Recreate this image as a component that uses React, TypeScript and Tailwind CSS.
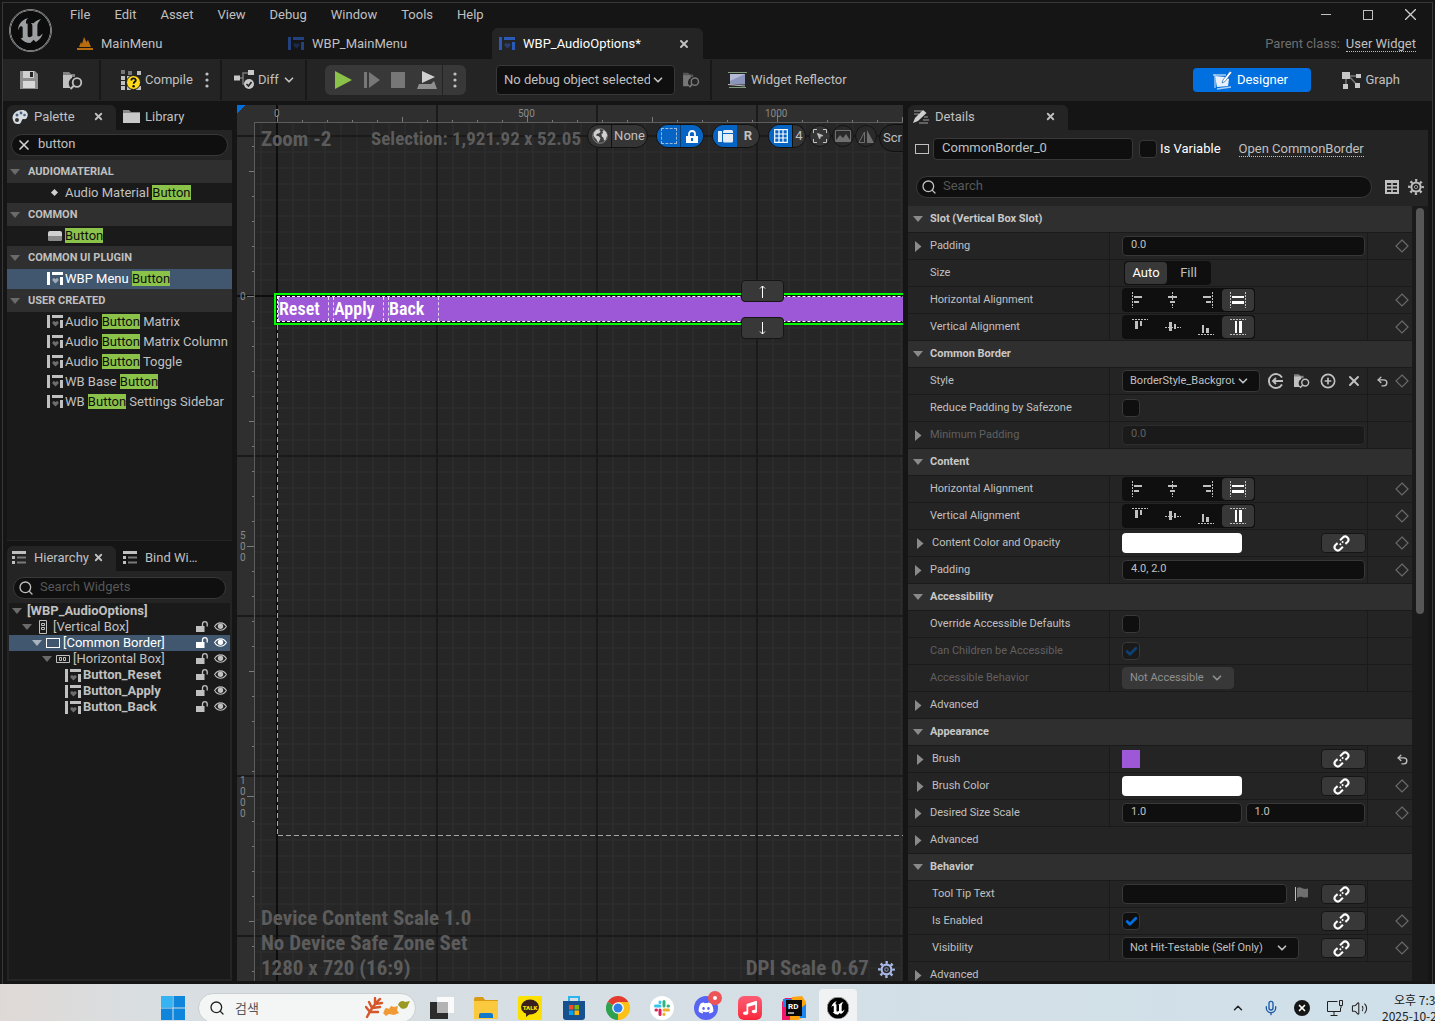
import { ReactNode } from "react";
import { SiUnrealengine } from "react-icons/si";
import { FaDiscord, FaMusic } from "react-icons/fa";
import {
  Check,
  ChevronDown,
  ChevronUp,
  CirclePlus,
  Mic,
  MousePointer2,
  Search,
  Undo2,
  Volume2,
  X,
} from "lucide-react";
import clsx from "clsx";

const menuItems = ["File", "Edit", "Asset", "View", "Debug", "Window", "Tools", "Help"];

const paletteGroups = [
  { name: "AUDIOMATERIAL", items: [{ icon: "dot", before: "Audio Material ", after: "" }] },
  { name: "COMMON", items: [{ icon: "button", before: "", after: "" }] },
  {
    name: "COMMON UI PLUGIN",
    items: [{ icon: "widget", before: "WBP Menu ", after: "", selected: true }],
  },
  {
    name: "USER CREATED",
    items: [
      { icon: "widget", before: "Audio ", after: " Matrix" },
      { icon: "widget", before: "Audio ", after: " Matrix Column" },
      { icon: "widget", before: "Audio ", after: " Toggle" },
      { icon: "widget", before: "WB Base ", after: "" },
      { icon: "widget", before: "WB ", after: " Settings Sidebar" },
    ],
  },
];

const treeNodes = [
  { label: "[WBP_AudioOptions]", indent: "pl-[3px]", icon: "root", bold: true },
  { label: "[Vertical Box]", indent: "pl-[13px]", icon: "vbox" },
  { label: "[Common Border]", indent: "pl-[23px]", icon: "border", selected: true },
  { label: "[Horizontal Box]", indent: "pl-[33px]", icon: "hbox" },
  { label: "Button_Reset", indent: "pl-[43px]", icon: "widget", bold: true },
  { label: "Button_Apply", indent: "pl-[43px]", icon: "widget", bold: true },
  { label: "Button_Back", indent: "pl-[43px]", icon: "widget", bold: true },
];

/* ---------- icons ---------- */

interface IconProps {
  className?: string;
}

const WidgetIcon = ({ className }: IconProps) => (
  <svg viewBox="0 0 16 13" className={clsx("h-[13px] w-4 shrink-0", className)} fill="currentColor">
    <path d="M0 0h3v13H0zM5 0h11v3H5zM13 5h3v8h-3z" />
    <path opacity=".5" d="M8.5 11.5 5.5 8.6V7l1.4-.9 1.6.9 1.6-.9 1.4.9v1.6z" />
  </svg>
);

const FolderSearchIcon = ({ className }: IconProps) => (
  <svg viewBox="0 0 20 19" className={clsx("shrink-0", className)}>
    <path d="M0 1h6l2 2h4v3H0z" fill="currentColor" opacity=".6" />
    <path d="M0 4h9v3a6 6 0 0 0-1 10H0z" fill="currentColor" />
    <circle cx="14" cy="11.5" r="4.3" fill="none" stroke="currentColor" strokeWidth="1.8" />
    <path d="m11 14.500-3.500 3.500" stroke="currentColor" strokeWidth="2" />
  </svg>
);

const GearIcon = ({ className }: IconProps) => (
  <svg viewBox="0 0 16 16" className={className} fill="none" stroke="currentColor">
    <circle cx="8" cy="8" r="4.600" strokeWidth="2" />
    <circle cx="8" cy="8" r="6.600" strokeWidth="2.600" strokeDasharray="2.200 2.983" strokeDashoffset="1.100" />
    <circle cx="8" cy="8" r="1.600" strokeWidth="1" opacity=".7" />
  </svg>
);

const ListIcon = () => (
  <svg viewBox="0 0 14 13" className="h-[13px] w-[14px] shrink-0">
    <path d="M0 0h14v3H0zM0 5h3v3H0zM0 10h3v3H0z" fill="#c0c0c0" />
    <path d="M5 5.500h9v2H5zM5 10.500h9v2H5z" fill="#7a7a7a" />
  </svg>
);

const ArrowDownIcon = ({ className }: IconProps) => (
  <svg viewBox="0 0 10 6" className={clsx("h-[6px] w-[10px] shrink-0", className)} fill="currentColor">
    <path d="M0 0h10L5 6z" />
  </svg>
);

const ArrowRightIcon = () => (
  <svg viewBox="0 0 8 12" className="h-3 w-2 shrink-0 text-[#8a8a8a]" fill="currentColor">
    <path d="M1 1v11l6.500-5.500z" />
  </svg>
);

const DotsIcon = () => (
  <svg viewBox="0 0 4 16" className="h-4 w-1" fill="#c0c0c0">
    <circle cx="2" cy="2" r="1.600" />
    <circle cx="2" cy="8" r="1.600" />
    <circle cx="2" cy="14" r="1.600" />
  </svg>
);

const UnlockIcon = () => (
  <svg viewBox="0 0 12 11" className="h-[11px] w-3" fill="currentColor">
    <path d="M0 5h8.500v6H0z" />
    <path d="M6.500 5.500V3a2.300 2.300 0 0 1 4.700 0v2.500" fill="none" stroke="currentColor" strokeWidth="1.300" />
  </svg>
);

const EyeIcon = () => (
  <svg viewBox="0 0 13 9" className="h-[9px] w-[13px]">
    <path d="M.6 4.500C3.500-.4 9.500-.4 12.400 4.500 9.500 9.400 3.500 9.400.6 4.500z" fill="none" stroke="currentColor" strokeWidth="1.100" />
    <circle cx="6.500" cy="4.300" r="2.700" fill="currentColor" />
  </svg>
);

const LinkIcon = () => (
  <svg viewBox="0 0 24 24" className="mr-1 size-[17px]" fill="none" stroke="#fff" strokeWidth="3">
    <path d="m17.500 12.500 3-2.500a4.600 4.600 0 0 0-6.500-6.500l-4 4" />
    <path d="m6.500 11.500-3 2.500a4.600 4.600 0 0 0 6.500 6.500l4-4" />
    <path d="m9.500 14 1.800-1.800M12.700 10.800l1.800-1.800" strokeWidth="2.500" />
  </svg>
);

const DiamondIcon = () => (
  <svg viewBox="0 0 14 14" className="size-[14px]" fill="none" stroke="#6a6a6a" strokeWidth="1.200">
    <path d="m7 1 6 6-6 6-6-6z" />
  </svg>
);

const HAlignIcon = ({ kind }: { kind: string }) => (
  <svg viewBox="0 0 16 16" className="size-4" shapeRendering="crispEdges">
    {kind === "start" && <path d="M2 4h8v2H2zM2 9h5v2H2z" fill="#c0c0c0" />}
    {kind === "center" && <path d="M3 4h9v2H3zM5 9h5v2H5z" fill="#c0c0c0" />}
    {kind === "end" && <path d="M5 4h8v2H5zM8 9h5v2H8z" fill="#c0c0c0" />}
    {kind === "fill" && <path d="M2 4h12v2H2zM2 9h12v3H2z" fill="#fff" />}
    {(kind === "start" || kind === "fill") && <path d="M.5 0v16" stroke="#c0c0c0" strokeDasharray="2 1" />}
    {kind === "center" && <path d="M7.500 0v16" stroke="#c0c0c0" strokeDasharray="2 1" />}
    {kind === "end" && <path d="M14.500 0v16" stroke="#c0c0c0" strokeDasharray="2 1" />}
    {kind === "fill" && <path d="M15.500 0v16" stroke="#c0c0c0" strokeDasharray="2 1" />}
  </svg>
);

const VAlignIcon = ({ kind }: { kind: string }) => (
  <svg viewBox="0 0 16 16" className="size-4" shapeRendering="crispEdges">
    {kind === "start" && <path d="M3 2h3v8H3zM8 2h2v5H8z" fill="#c0c0c0" />}
    {kind === "center" && <path d="M4 3h3v9H4zM9 5h2v5H9z" fill="#c0c0c0" />}
    {kind === "end" && <path d="M4 6h2v8H4zM8 9h3v5H8z" fill="#c0c0c0" />}
    {kind === "fill" && <path d="M5 2h2v12H5zM9 2h3v12H9z" fill="#fff" />}
    {(kind === "start" || kind === "fill") && <path d="M0 .5h16" stroke="#c0c0c0" strokeDasharray="2 1" />}
    {kind === "center" && <path d="M0 8.500h16" stroke="#c0c0c0" strokeDasharray="2 1" />}
    {(kind === "end" || kind === "fill") && <path d="M0 15.500h16" stroke="#c0c0c0" strokeDasharray="2 1" />}
  </svg>
);

/* ---------- shared controls ---------- */

interface SearchFieldProps {
  label: string;
  placeholder?: string;
  value?: string;
  clearable?: boolean;
}

const SearchField = ({ label, placeholder, value, clearable }: SearchFieldProps) => (
  <label className="flex h-[22px] min-w-0 flex-1 items-center rounded-full border border-[#383838] bg-[#0f0f0f] pl-1">
    {clearable ? (
      <X className="size-4 shrink-0 text-[#d0d0d0]" strokeWidth={2.5} />
    ) : (
      <Search className="size-4 shrink-0 text-[#c0c0c0]" strokeWidth={2} />
    )}
    <input
      aria-label={label}
      placeholder={placeholder}
      defaultValue={value}
      className="h-5 min-w-0 flex-1 bg-transparent pr-2 pb-[3px] pl-[6px] text-[13px] text-[#c0c0c0] outline-none placeholder:text-[#575757]"
    />
  </label>
);

interface SelectFieldProps {
  label: string;
  value: string;
  width: string;
  tone?: string;
  disabled?: boolean;
}

const SelectField = ({ label, value, width, tone, disabled }: SelectFieldProps) => (
  <div className={clsx("relative", width)}>
    <select
      aria-label={label}
      disabled={disabled}
      className={clsx(
        "block w-full appearance-none overflow-hidden rounded-sm border border-[#383838] pl-[7px] opacity-100",
        tone ?? "h-[22px] bg-[#0f0f0f] pr-6 text-[11px] text-[#c0c0c0]",
      )}
    >
      <option>{value}</option>
    </select>
    <ChevronDown
      strokeWidth={3}
      className={clsx(
        "pointer-events-none absolute inset-y-0 right-2.5 my-auto size-3.5",
        disabled ? "text-[#909090]" : "text-[#c0c0c0]",
      )}
    />
  </div>
);

interface TextFieldProps {
  label: string;
  value?: string;
  disabled?: boolean;
}

const TextField = ({ label, value, disabled }: TextFieldProps) => (
  <input
    aria-label={label}
    defaultValue={value}
    disabled={disabled}
    className="h-5 min-w-0 flex-1 rounded-sm border border-[#383838] bg-[#0f0f0f] px-2 pb-[3px] text-[11px] text-[#c0c0c0] disabled:border-[#2c2c2c] disabled:bg-[#1a1a1a] disabled:text-[#606060]"
  />
);

interface CheckBoxProps {
  label: string;
  checked?: boolean;
  disabled?: boolean;
}

const CheckBox = ({ label, checked, disabled }: CheckBoxProps) => (
  <span className="relative flex size-[18px]">
    <input
      type="checkbox"
      aria-label={label}
      defaultChecked={checked}
      disabled={disabled}
      className="peer size-[18px] appearance-none rounded-sm border border-[#383838] bg-[#0f0f0f] disabled:bg-[#1a1a1a]"
    />
    <Check
      strokeWidth={5}
      className="pointer-events-none absolute inset-0 m-auto hidden size-[13px] text-[#0070e0] peer-checked:block peer-disabled:text-[#0d4175]"
    />
  </span>
);

const ColorSwatch = ({ label }: { label: string }) => (
  <button aria-label={label} className="h-5 w-[120px] rounded-sm bg-white" />
);

const AlignGroup = ({ axis }: { axis: "h" | "v" }) => (
  <div className="flex h-6 rounded-sm bg-[#0f0f0f] p-px">
    {["start", "center", "end", "fill"].map((kind) => (
      <button
        key={kind}
        aria-label={`Align ${kind}`}
        className={clsx(
          "flex items-center justify-center rounded-sm",
          kind === "fill" ? "w-8 bg-[#383838]" : "w-[33px]",
        )}
      >
        {axis === "h" ? <HAlignIcon kind={kind} /> : <VAlignIcon kind={kind} />}
      </button>
    ))}
  </div>
);

/* ---------- window header ---------- */

interface AssetTabProps {
  title: string;
  icon: ReactNode;
  active?: boolean;
}

const AssetTab = ({ title, icon, active }: AssetTabProps) => (
  <div
    className={clsx(
      "flex h-[31px] w-[211px] items-center gap-2 rounded-t-md pr-[13px] pl-[7px]",
      active ? "bg-[#242424] text-white" : "text-[#c0c0c0]",
    )}
  >
    {icon}
    <span className="flex-1">{title}</span>
    {active && (
      <button aria-label="Close tab">
        <X className="size-3 text-[#c0c0c0]" strokeWidth={4} />
      </button>
    )}
  </div>
);

const Header = () => (
  <header className="flex h-14 shrink-0 bg-[#151515] text-[13px] text-[#c0c0c0]">
    <div className="flex w-[67px] shrink-0 items-start pt-[6px] pl-[6px]">
      <SiUnrealengine className="size-[43px] rounded-full border border-[#8b8d8f] bg-[#0c0c0c] text-[#9c9fa1]" />
    </div>
    <div className="flex flex-1 flex-col">
      <nav className="flex h-[25px] items-center gap-6 pb-0.5">
        {menuItems.map((item) => (
          <button key={item}>{item}</button>
        ))}
      </nav>
      <div className="flex">
        <AssetTab
          title="MainMenu"
          icon={
            <svg viewBox="0 0 16 13" className="h-[13px] w-4" fill="#b86c0d">
              <path d="M0 11h16v2H0zM2 10 4 5l1 2 2-7 2.500 5L11 3l3 7z" />
            </svg>
          }
        />
        <AssetTab title="WBP_MainMenu" icon={<WidgetIcon className="text-[#23407f]" />} />
        <AssetTab title="WBP_AudioOptions*" active icon={<WidgetIcon className="text-[#2b59b8]" />} />
      </div>
    </div>
    <div className="flex flex-col items-end pr-4">
      <div className="flex h-[25px] items-center gap-8 pb-0.5">
        <button aria-label="Minimize" className="h-px w-[10px] bg-[#c0c0c0]" />
        <button aria-label="Maximize" className="size-[10px] border border-[#c0c0c0]" />
        <button aria-label="Close">
          <svg viewBox="0 0 11 11" className="size-[11px]" stroke="#d0d0d0" strokeWidth="1.300">
            <path d="m0 0 11 11M11 0 0 11" />
          </svg>
        </button>
      </div>
      <p className="flex h-[31px] items-center gap-1.5">
        <span className="text-[#6f6f6f]">Parent class:</span>
        <a href="#" className="border-b border-dotted border-[#c0c0c0] leading-[15px]">
          User Widget
        </a>
      </p>
    </div>
  </header>
);

const Separator = () => <span className="h-10 w-0.5 shrink-0 bg-[#181818]" />;

const Toolbar = () => (
  <div className="flex h-[42px] shrink-0 items-center bg-[#242424] text-[13px] text-[#c0c0c0]">
    <div className="flex w-24 items-center gap-[25px] pl-[17px]">
      <button aria-label="Save">
        <svg viewBox="0 0 18 18" className="size-[18px]">
          <path d="M0 0h15l3 3v15H0z" fill="#8f8f8f" />
          <path d="M3 0h11v7H3z" fill="#d0d0d0" />
          <path d="M10 1h3v5h-3z" fill="#242424" />
          <path d="M3 10h12v7H3z" fill="#d8d8d8" />
        </svg>
      </button>
      <button aria-label="Browse to asset">
        <FolderSearchIcon className="h-[19px] w-5" />
      </button>
    </div>
    <Separator />
    <div className="flex w-[119px] items-center pl-5">
      <button className="flex items-center gap-1">
        <svg viewBox="0 0 20 20" className="size-5">
          <path d="M0 6h4v4H0zM6 6h4v4H6zM0 11h4v4H0zM0 16h4v4H0zM6 16h4v4H6zM15 16h5v4h-5zM16 1h4v4h-4z" fill="#c0c0c0" />
          <path d="M0 0h4v4H0zM7 1h4v4H7z" fill="#777" />
          <circle cx="12.500" cy="12.500" r="7" fill="#ffd91a" stroke="#1a1a1a" />
          <path d="M10.300 10.600c0-3 4.500-2.800 4.500-.3 0 1.600-2.200 1.500-2.200 3.500" fill="none" stroke="#111" strokeWidth="1.800" />
          <circle cx="12.600" cy="16.300" r="1.200" fill="#111" />
        </svg>
        Compile
      </button>
      <button aria-label="Compile options" className="ml-3">
        <DotsIcon />
      </button>
    </div>
    <Separator />
    <div className="flex w-[83px] items-center pl-3">
      <button className="flex items-center gap-[3px]">
        <svg viewBox="0 0 21 20" className="h-5 w-[21px]">
          <path d="M5 8h4V3h6M9 8v6h3" fill="none" stroke="#777" strokeWidth="1.500" />
          <path d="M0 5.500h6v5H0zM14 0h6v5h-6z" fill="#c8c8c8" />
          <circle cx="15" cy="14" r="5" fill="#c8c8c8" />
          <path d="m12.500 14 2 2 3-4" fill="none" stroke="#242424" strokeWidth="1.600" />
        </svg>
        Diff
        <ChevronDown className="size-3.5" strokeWidth={3} />
      </button>
    </div>
    <Separator />
    <div className="ml-[18px] flex h-[30px] items-center rounded-md bg-[#383838]">
      <div className="flex w-[117px] items-center justify-between pr-[5px] pl-2.5">
        <button aria-label="Play">
          <svg viewBox="0 0 17 18" className="h-[18px] w-[17px]">
            <path d="M0 0v18l17-9z" fill="#8bc24a" />
          </svg>
        </button>
        <button aria-label="Step">
          <svg viewBox="0 0 16 16" className="size-4" fill="#777">
            <path d="M0 0h3v16H0zM5 0v16l11-8z" />
          </svg>
        </button>
        <button aria-label="Stop" className="h-4 w-[14px] bg-[#777]" />
        <button aria-label="Launch">
          <svg viewBox="0 0 20 18" className="h-[18px] w-5">
            <path d="M5 0v12l13-6z" fill="#d0d0d0" />
            <path d="M2 13h12l3-3 3 8H0z" fill="#8f8f8f" />
          </svg>
        </button>
      </div>
      <span className="h-full w-px bg-[#242424]" />
      <button aria-label="Play options" className="flex w-[23px] justify-center">
        <DotsIcon />
      </button>
    </div>
    <div className="ml-[30px]">
      <SelectField
        label="Debug object"
        value="No debug object selected"
        width="w-[179px]"
        tone="h-[30px] bg-[#0f0f0f] pr-6 text-[13px] text-[#c0c0c0]"
      />
    </div>
    <button aria-label="Find debug object" className="mr-[10px] ml-2 text-[#777]">
      <FolderSearchIcon className="h-4 w-[17px]" />
    </button>
    <Separator />
    <button className="ml-4 flex items-center gap-1">
      <svg viewBox="0 0 19 16" className="h-4 w-[19px]">
        <path d="M0 .5h19M1 15.500h17" stroke="#7d9d7d" strokeWidth="1" />
        <path d="M2 2h15v10.500H2z" fill="#8b95ba" />
        <path d="M2 2h15L2 9z" fill="#b3bbd8" />
        <path d="M0 12.500 17 14" stroke="#c0c0c0" strokeWidth="1" />
      </svg>
      Widget Reflector
    </button>
    <div className="ml-auto flex items-center pr-8">
      <button className="flex h-6 w-[118px] items-center justify-center gap-1 rounded bg-[#0070e0] pr-1 text-white">
        <svg viewBox="0 0 20 19" className="h-[19px] w-5">
          <path d="m2 5 10 1 4 2-1 7-11 1z" fill="#e8f1fb" />
          <path d="M0 4h13M2 3v14M4 18l14-2" fill="none" stroke="#a9cdf3" strokeWidth="1.300" />
          <path d="m9 12 1-3 7-9 2 1.500-7 9z" fill="#fff" stroke="#0a4c96" strokeWidth=".6" />
        </svg>
        Designer
      </button>
      <button className="ml-[31px] flex items-center gap-1">
        <svg viewBox="0 0 19 17" className="h-[17px] w-[19px]">
          <path d="M4 4v9M7 4l8 9M7 4h8" stroke="#777" strokeWidth="1.500" />
          <path d="M0 0h8v7H0zM14 2h5v4h-5zM1 12h5v5H1zM13 11h5v5h-5z" fill="#c8c8c8" />
        </svg>
        Graph
      </button>
    </div>
  </div>
);

/* ---------- left side ---------- */

interface PanelTabProps {
  title: string;
  icon: ReactNode;
  active?: boolean;
  width?: string;
}

const PanelTab = ({ title, icon, active, width = "w-[109px]" }: PanelTabProps) => (
  <div
    className={clsx(
      "flex h-[25px] shrink-0 items-center rounded-t-md pb-0.5 pl-[5px] text-[13px] text-[#c0c0c0]",
      width,
      active && "bg-[#242424]",
    )}
  >
    <span className="flex w-[22px] shrink-0 items-center">{icon}</span>
    <span className="whitespace-nowrap">{title}</span>
    {active && (
      <button aria-label={`Close ${title}`} className="ml-auto pr-3">
        <X className="size-[11px]" strokeWidth={4} />
      </button>
    )}
  </div>
);

const PaletteItemIcon = ({ kind }: { kind: string }) => {
  if (kind === "dot") {
    return <span className="mr-2 size-[5px] rotate-45 bg-[#d0d0d0]" />;
  }
  if (kind === "button") {
    return (
      <svg viewBox="0 0 14 10" className="mr-[3px] h-[10px] w-[14px]">
        <rect width="14" height="10" rx="2" fill="#d0d0d0" />
        <path d="M0 5h14v3a2 2 0 0 1-2 2H2a2 2 0 0 1-2-2z" fill="#8a8a8a" />
      </svg>
    );
  }
  return <WidgetIcon className="mr-0.5" />;
};

const Palette = () => (
  <section className="flex min-h-0 flex-[436_1_0%] flex-col">
    <div className="flex gap-0.5">
      <PanelTab
        active
        title="Palette"
        icon={
          <svg viewBox="0 0 16 14" className="h-[14px] w-4">
            <path d="M1 10C-1 5 4 0 10 0c5 0 7 4 5 7.500-1.500 3-4 .5-5 2.500s-1 4-4 4-4-1-5-4z" fill="#d8dde2" />
            <circle cx="5" cy="5" r="1.500" fill="#46627f" />
            <circle cx="9" cy="3" r="1.400" fill="#46627f" />
            <circle cx="12.500" cy="5" r="1.300" fill="#46627f" />
            <circle cx="5" cy="10" r="2" fill="#333" />
          </svg>
        }
      />
      <PanelTab
        title="Library"
        icon={
          <svg viewBox="0 0 17 13" className="h-[13px] w-[17px]">
            <path d="M0 0h6l2 2h9v2H0z" fill="#8a8a8a" />
            <path d="M0 3h17v10H0z" fill="#c8c8c8" />
          </svg>
        }
      />
    </div>
    <div className="flex min-h-0 flex-1 flex-col bg-[#242424] pb-px">
      <div className="flex px-1 py-1">
        <SearchField label="Search palette" value="button" clearable />
      </div>
      <div className="flex-1 overflow-hidden bg-[#1a1a1a]">
        {paletteGroups.map((group) => (
          <div key={group.name}>
            <h3 className="flex h-[23px] items-center gap-2 bg-[#2f2f2f] pt-px pl-[3px] text-[11px] font-bold text-[#c0c0c0]">
              <ArrowDownIcon className="text-[#6a6a6a]" />
              {group.name}
            </h3>
            <ul>
              {group.items.map((item) => (
                <li
                  key={item.before + item.after}
                  className={clsx(
                    "flex h-5 items-center pb-px text-[13px] whitespace-pre",
                    "selected" in item ? "bg-[#40576f] text-white" : "text-[#c0c0c0]",
                  )}
                >
                  <span className="flex w-[58px] shrink-0 items-center justify-end">
                    <PaletteItemIcon kind={item.icon} />
                  </span>
                  {item.before}
                  <mark className="bg-[#8bc24a] leading-[15px] text-[#101010]">Button</mark>
                  {item.after}
                </li>
              ))}
            </ul>
          </div>
        ))}
      </div>
    </div>
  </section>
);

const TreeIcon = ({ kind }: { kind: string }) => {
  if (kind === "widget") {
    return <WidgetIcon />;
  }
  if (kind === "border") {
    return <span className="h-[10px] w-[14px] border border-current" />;
  }
  if (kind === "vbox") {
    return (
      <svg viewBox="0 0 8 14" className="h-[14px] w-2" fill="none" stroke="currentColor">
        <path d="M.5.5h7v13h-7zM2.500 3.500h3v2h-3zM2.500 7.500h3v2h-3z" />
      </svg>
    );
  }
  return (
    <svg viewBox="0 0 14 8" className="h-2 w-[14px]" fill="none" stroke="currentColor">
      <path d="M.5.5h13v7H.5zM3.500 2.500h2v3h-2zM7.500 2.500h2v3h-2z" />
    </svg>
  );
};

const Hierarchy = () => (
  <section className="flex min-h-0 flex-[435_1_0%] flex-col">
    <div className="flex gap-0.5">
      <PanelTab active title="Hierarchy" icon={<ListIcon />} />
      <PanelTab title="Bind Wi…" icon={<ListIcon />} />
    </div>
    <div className="flex min-h-0 flex-1 flex-col bg-[#242424] px-0.5 pb-0.5">
      <div className="flex px-1 pt-1.5 pb-1">
        <SearchField label="Search widgets" placeholder="Search Widgets" />
      </div>
      <ul className="flex-1 overflow-hidden bg-[#1a1a1a] text-[13px] leading-4">
        {treeNodes.map((node) => (
          <li
            key={node.label}
            className={clsx(
              "flex h-4 items-center pr-[3px]",
              node.indent,
              node.selected ? "bg-[#40576f] text-white" : "text-[#c0c0c0]",
              node.bold && "font-bold",
            )}
          >
            <span className="w-[11px] shrink-0">
              {node.icon !== "widget" && (
                <ArrowDownIcon className={node.selected ? "text-[#a9b4bf]" : "text-[#6a6a6a]"} />
              )}
            </span>
            {node.icon === "root" ? (
              <span className="w-1" />
            ) : (
              <span className="flex w-5 shrink-0 justify-center">
                <TreeIcon kind={node.icon} />
              </span>
            )}
            <span className="flex-1 whitespace-nowrap">{node.label}</span>
            {node.icon !== "root" && (
              <span className="flex items-center gap-1.5 pb-0.5">
                <button aria-label={`Lock ${node.label}`}>
                  <UnlockIcon />
                </button>
                <button aria-label={`Hide ${node.label}`}>
                  <EyeIcon />
                </button>
              </span>
            )}
          </li>
        ))}
      </ul>
    </div>
  </section>
);

/* ---------- designer canvas ---------- */

const CanvasGrid = () => (
  <svg className="absolute inset-0 size-full" shapeRendering="crispEdges">
    <defs>
      <pattern id="minor" x="39" y="190" width="16" height="16" patternUnits="userSpaceOnUse">
        <path d="M0 0h16v2H0zM0 0h2v16H0z" fill="#2b2b2b" />
      </pattern>
      <pattern id="major" x="39" y="190" width="160" height="160" patternUnits="userSpaceOnUse">
        <path d="M0 0h160v2H0zM0 0h2v160H0z" fill="#1a1a1a" />
      </pattern>
      <pattern id="ticksX" x="40" y="0" width="250" height="17" patternUnits="userSpaceOnUse">
        <path
          d="M0 10h1v7H0zM25 15h1v2h-1zM50 15h1v2h-1zM75 15h1v2h-1zM100 15h1v2h-1zM125 12h1v5h-1zM150 15h1v2h-1zM175 15h1v2h-1zM200 15h1v2h-1zM225 15h1v2h-1z"
          fill="#7a7a7a"
        />
      </pattern>
      <pattern id="ticksY" x="0" y="191" width="17" height="250" patternUnits="userSpaceOnUse">
        <path
          d="M10 0v1h7V0zM15 25v1h2v-1zM15 50v1h2v-1zM15 75v1h2v-1zM15 100v1h2v-1zM12 125v1h5v-1zM15 150v1h2v-1zM15 175v1h2v-1zM15 200v1h2v-1zM15 225v1h2v-1z"
          fill="#7a7a7a"
        />
      </pattern>
    </defs>
    <rect width="100%" height="100%" fill="#262626" />
    <rect width="100%" height="100%" fill="url(#minor)" />
    <rect width="100%" height="17" fill="#2f2f2f" />
    <rect width="17" height="100%" fill="#2f2f2f" />
    <rect width="100%" height="100%" fill="url(#major)" />
    <rect x="39" width="2" height="100%" fill="#0d0d0d" />
    <rect y="190" width="100%" height="2" fill="#0d0d0d" />
    <rect x="18" width="100%" height="17" fill="url(#ticksX)" />
    <rect y="18" width="17" height="100%" fill="url(#ticksY)" />
    <rect x="17" y="17" width="100%" height="1" fill="#5c5c5c" />
    <rect x="17" y="17" width="1" height="100%" fill="#5c5c5c" />
    <path d="M0 0h8L0 8z" fill="#0070e0" />
    {/* screen bounds of the widget being edited */}
    <path d="M40.500 220v510" stroke="#a8a8a8" strokeDasharray="5 3" />
    <path d="M41 730.500h2000" stroke="#a8a8a8" strokeDasharray="5 3" />
  </svg>
);

const CanvasLabel = ({ children, className }: { children: ReactNode; className: string }) => (
  <span className={clsx("absolute text-[10px] leading-[11px] font-normal text-[#8a8a8a]", className)}>
    {children}
  </span>
);

const MoveButton = ({ up }: { up?: boolean }) => (
  <button
    aria-label={up ? "Move up" : "Move down"}
    className={clsx(
      "absolute left-[504px] flex h-[22px] w-[43px] items-center justify-center rounded border border-[#151515] bg-[#383838]",
      up ? "top-[175px]" : "top-[212px]",
    )}
  >
    <svg viewBox="0 0 9 13" className={clsx("h-[13px] w-[9px]", !up && "rotate-180")} fill="none" stroke="#fff">
      <path d="M4.500 13V1M2 3.500l2.500-2.500L7 3.500" />
    </svg>
  </button>
);

const RoundButton = ({ label, children, dim }: { label: string; children: ReactNode; dim?: boolean }) => (
  <button
    aria-label={label}
    className={clsx(
      "flex size-[22px] shrink-0 items-center justify-center rounded-full border border-[#151515]",
      dim ? "bg-[#2a2a2a] text-[#6f6f6f]" : "bg-[#353535] text-[#c0c0c0]",
    )}
  >
    {children}
  </button>
);

const Pill = ({ children }: { children: ReactNode }) => (
  <div className="flex h-6 shrink-0 items-stretch overflow-hidden rounded-full border border-[#111] bg-[#353535]">
    {children}
  </div>
);

const Canvas = () => (
  <main className="relative min-w-0 flex-1 overflow-hidden font-bold">
    <CanvasGrid />
    <CanvasLabel className="top-[3px] left-[37px]">0</CanvasLabel>
    <CanvasLabel className="top-[3px] left-[281px]">500</CanvasLabel>
    <CanvasLabel className="top-[3px] left-[528px]">1000</CanvasLabel>
    <CanvasLabel className="top-[186px] left-[3px]">0</CanvasLabel>
    <CanvasLabel className="top-[425px] left-[3px] w-1 break-all">500</CanvasLabel>
    <CanvasLabel className="top-[670px] left-[3px] w-1 break-all">1000</CanvasLabel>

    <div className="absolute top-[19px] left-6 flex text-[#5c5c5c]">
      <p className="w-[110px] shrink-0 pt-[3px] text-[21px] leading-6 [font-family:'Roboto_Condensed',Roboto,sans-serif]">
        Zoom -2
      </p>
      <p className="w-[216px] shrink-0 pt-[3px] text-[19px] leading-6 whitespace-nowrap [font-family:'Roboto_Condensed',Roboto,sans-serif]">
        Selection: 1,921.92 x 52.05
      </p>
      <div className="flex items-start text-[13px] font-normal text-[#c0c0c0]">
        <div className="flex gap-2">
          <Pill>
            <button aria-label="Localization" className="flex w-6 items-center justify-center border-r border-[#111]">
              <svg viewBox="0 0 16 16" className="size-4">
                <circle cx="8" cy="8" r="7.300" fill="#404040" stroke="#8f8f8f" strokeWidth=".8" />
                <path
                  d="M2 4.500 4.500 1.800 8 1l-.5 1.800 1.300 1-2 1.700-1.800.3L4 7.500l2.800.8 1.700 2-1 2.200-1.300 2.300-1.700-3.300-1.800-2-1.200-2zM10.500 3l1.500-.800 2.300 2.300 1 3-.8 1.500-1 3-1.500.5-.7-3-1.500-1-.3-2.500 1.500-1z"
                  fill="#d0d0d0"
                />
              </svg>
            </button>
            <button className="w-[35px]">None</button>
          </Pill>
          <Pill>
            <button aria-label="Show outlines" className="flex w-6 items-center justify-center border-r border-[#0c3c70] bg-[#0664c4]">
              <span className="size-4 border border-dashed border-[#9cb8d8]" />
            </button>
            <button aria-label="Respect locks" className="flex w-[22px] items-center justify-center bg-[#0664c4]">
              <svg viewBox="0 0 12 13" className="h-[13px] w-3">
                <path d="M0 6h12v7H0z" fill="#fff" />
                <path d="M3 7V4a3 3 0 0 1 6 0v3" fill="none" stroke="#fff" strokeWidth="1.800" />
                <path d="M5 8h2v3H5z" fill="#0664c4" />
              </svg>
            </button>
          </Pill>
          <Pill>
            <button aria-label="Layout transform" className="flex w-6 items-center justify-center bg-[#0664c4]">
              <svg viewBox="0 0 15 13" className="h-[13px] w-[15px]" fill="#e8eef6">
                <path d="M0 1h4v11H0zM5 4h10v7a1.500 1.500 0 0 1-1.500 1.500h-7A1.500 1.500 0 0 1 5 11zM5 1.500A1.500 1.500 0 0 1 6.500 0h7A1.500 1.500 0 0 1 15 1.500V3H5z" />
              </svg>
            </button>
            <button className="w-[22px] font-bold">R</button>
          </Pill>
          <Pill>
            <button aria-label="Snap to grid" className="flex w-6 items-center justify-center border-r border-[#111] bg-[#0664c4]">
              <svg viewBox="0 0 14 14" className="size-[14px]" fill="none" stroke="#fff" strokeWidth="1.200">
                <path d="M.7.700h12.600v12.600H.7zM5 .7v12.600M9 .7v12.600M.7 5h12.600M.7 9h12.600" />
              </svg>
            </button>
            <button className="w-3">4</button>
          </Pill>
        </div>
        <div className="ml-[3px] flex gap-px pt-px">
          <RoundButton label="Zoom to fit">
            <svg viewBox="0 0 14 14" className="absolute size-[14px]" fill="none" stroke="currentColor">
              <path d="M.5 4V.5H4M10 .5h3.500V4M13.500 10v3.500H10M4 13.500H.5V10" />
            </svg>
            <MousePointer2 className="size-2" fill="currentColor" />
          </RoundButton>
          <RoundButton label="Preview background" dim>
            <svg viewBox="0 0 16 12" className="h-3 w-4">
              <path d="M.5.5h15v11H.5z" fill="none" stroke="currentColor" />
              <path d="m1 10 4-5 3 3 3-4 4 6v1H1z" fill="currentColor" />
            </svg>
          </RoundButton>
          <RoundButton label="Mirror preview" dim>
            <svg viewBox="0 0 16 13" className="h-[13px] w-4">
              <path d="M9 0v13h7z" fill="currentColor" />
              <path d="M6.500 2v10.500H1z" fill="none" stroke="currentColor" />
            </svg>
          </RoundButton>
        </div>
        <button
          aria-label="Screen size"
          className="ml-0.5 flex h-7 w-28 items-center rounded-full border border-[#111] bg-[#242424] pl-[3px]"
        >
          Scr
        </button>
      </div>
    </div>

    {/* selected border widget with its three buttons */}
    <div className="absolute top-[188px] left-[37px] flex h-8 w-[1200px] border-2 border-[#0f0] bg-[#15101a] p-px">
      <div className="flex flex-1 gap-1 border border-dashed border-white bg-[#9c58d6] bg-clip-padding text-[18px] leading-6 text-white [font-family:'Roboto_Condensed',Roboto,sans-serif]">
        {["Reset", "Apply", "Back"].map((name) => (
          <button key={name} className="w-[51px] border-r border-l border-dashed border-[#e4d2f3] text-left font-semibold">
            {name}
          </button>
        ))}
      </div>
    </div>
    <MoveButton up />
    <MoveButton />

    <div className="absolute inset-x-6 bottom-0 flex items-end justify-between pr-[10px] text-[21px] leading-[25px] text-[#5c5c5c] [font-family:'Roboto_Condensed',Roboto,sans-serif]">
      <p>
        Device Content Scale 1.0
        <br />
        No Device Safe Zone Set
        <br />
        1280 x 720 (16:9)
      </p>
      <p>DPI Scale 0.67</p>
    </div>
    <button aria-label="DPI settings" className="absolute right-2 bottom-[3px] text-[#a9bbe8]">
      <GearIcon className="size-[17px]" />
    </button>
  </main>
);

/* ---------- details panel ---------- */

const Category = ({ title }: { title: string }) => (
  <h3 className="flex h-[27px] items-center gap-[7px] border-b border-[#1a1a1a] bg-[#2f2f2f] pl-[5px] text-[11px] font-bold text-[#c8c8c8]">
    <ArrowDownIcon className="text-[#8a8a8a]" />
    {title}
  </h3>
);

interface RowProps {
  label: string;
  children?: ReactNode;
  expandable?: boolean;
  disabled?: boolean;
  /** row has a property binding button and a slightly deeper label */
  bound?: boolean;
  end?: "diamond" | "undo" | "both";
}

const Row = ({ label, children, expandable, disabled, bound, end }: RowProps) => (
  <div className="grid h-[27px] grid-cols-[201px_1fr_45px] border-b border-[#1a1a1a] text-[11px] text-[#c0c0c0]">
    <div className={clsx("flex items-center", bound ? "pl-2" : "pl-1.5", disabled && "text-[#606060]")}>
      <span className="w-4 shrink-0">{expandable && <ArrowRightIcon />}</span>
      {label}
    </div>
    <div className="flex min-w-0 items-center border-l border-[#1a1a1a] pl-3">
      <div className={clsx("flex min-w-0 flex-1 items-center gap-1", !bound && "pr-0.5")}>{children}</div>
      {bound && (
        <button
          aria-label={`Bind ${label}`}
          className="mr-px ml-3 flex h-5 w-[45px] shrink-0 items-center justify-center rounded-sm border border-[#151515] bg-[#383838]"
        >
          <LinkIcon />
        </button>
      )}
    </div>
    <div className="flex items-center justify-end gap-1.5 border-l border-[#1a1a1a] pr-[3px]">
      {(end === "undo" || end === "both") && (
        <button aria-label={`Reset ${label}`}>
          <Undo2 className="size-[13px]" strokeWidth={2.5} />
        </button>
      )}
      {(end === "diamond" || end === "both") && <DiamondIcon />}
    </div>
  </div>
);

const AdvancedRow = () => (
  <div className="flex h-[27px] items-center border-b border-[#1a1a1a] pl-1.5 text-[11px] text-[#c0c0c0]">
    <span className="w-4">
      <ArrowRightIcon />
    </span>
    Advanced
  </div>
);

const Details = () => (
  <aside className="flex w-[520px] shrink-0 flex-col">
    <PanelTab
      active
      width="w-40"
      title="Details"
      icon={
        <svg viewBox="0 0 16 15" className="h-[15px] w-4">
          <path d="M1 2h8M1 5h5M11 8h4M10 11h6M6 14h9" stroke="#777" strokeWidth="1.300" />
          <path d="M0 14 2 9l8-8 3.500 3L5 12z" fill="#d0d0d0" />
        </svg>
      }
    />
    <div className="flex min-h-0 flex-1 flex-col bg-[#242424]">
      <div className="flex h-[38px] shrink-0 items-center px-[7px] text-[13px] text-[#c0c0c0]">
        <span className="mr-1 h-[10px] w-[14px] border border-[#c0c0c0]" />
        <input
          aria-label="Widget name"
          defaultValue="CommonBorder_0"
          className="h-[22px] w-[200px] rounded border border-[#383838] bg-[#0f0f0f] px-2 pb-1"
        />
        <label className="ml-1.5 flex items-center gap-[3px] text-white">
          <CheckBox label="Is Variable" />
          Is Variable
        </label>
        <a href="#" className="ml-[18px] border-b border-dotted border-[#c0c0c0] leading-[15px]">
          Open CommonBorder
        </a>
      </div>
      <div className="flex h-[38px] shrink-0 items-center pr-1 pl-2">
        <SearchField label="Search details" placeholder="Search" />
        <button aria-label="Open property matrix" className="ml-[13px]">
          <svg viewBox="0 0 14 14" className="size-[14px]">
            <path d="M0 0h14v14H0z" fill="#c0c0c0" />
            <path d="M2 4h10M2 7.500h10M2 11h10" stroke="#242424" strokeWidth="2" />
            <path d="M7 3v10" stroke="#c0c0c0" strokeWidth="1.500" />
          </svg>
        </button>
        <button aria-label="Details settings" className="ml-[9px] text-[#c0c0c0]">
          <GearIcon className="size-4" />
        </button>
      </div>
      <div className="flex min-h-0 flex-1">
        <div className="min-w-0 flex-1 overflow-hidden">
          <Category title="Slot (Vertical Box Slot)" />
          <Row label="Padding" expandable end="diamond">
            <TextField label="Slot padding" value="0.0" />
          </Row>
          <Row label="Size">
            <div className="ml-0.5 flex h-6 rounded-sm bg-[#0f0f0f] p-px text-[13px]">
              <button className="w-[42px] rounded-sm bg-[#383838] text-white">Auto</button>
              <button className="w-[43px]">Fill</button>
            </div>
          </Row>
          <Row label="Horizontal Alignment" end="diamond">
            <AlignGroup axis="h" />
          </Row>
          <Row label="Vertical Alignment" end="diamond">
            <AlignGroup axis="v" />
          </Row>

          <Category title="Common Border" />
          <Row label="Style" end="both">
            <SelectField label="Style" value="BorderStyle_Background" width="w-[138px] shrink-0" />
            <div className="ml-1 flex items-center gap-[10px]">
              <button aria-label="Use selected asset">
                <svg viewBox="0 0 16 16" className="size-4" fill="none" stroke="currentColor" strokeWidth="1.900">
                  <path d="M14 4.500a7 7 0 1 0 0 7M15 8H5M8 5 5 8l3 3" />
                </svg>
              </button>
              <button aria-label="Browse to style">
                <FolderSearchIcon className="size-4" />
              </button>
              <button aria-label="Create style">
                <CirclePlus className="size-4" strokeWidth={2.5} />
              </button>
              <button aria-label="Clear style">
                <X className="size-4" strokeWidth={3} />
              </button>
            </div>
          </Row>
          <Row label="Reduce Padding by Safezone">
            <CheckBox label="Reduce Padding by Safezone" />
          </Row>
          <Row label="Minimum Padding" expandable disabled>
            <TextField label="Minimum Padding" value="0.0" disabled />
          </Row>

          <Category title="Content" />
          <Row label="Horizontal Alignment" end="diamond">
            <AlignGroup axis="h" />
          </Row>
          <Row label="Vertical Alignment" end="diamond">
            <AlignGroup axis="v" />
          </Row>
          <Row label="Content Color and Opacity" expandable bound end="diamond">
            <ColorSwatch label="Content Color and Opacity" />
          </Row>
          <Row label="Padding" expandable end="diamond">
            <TextField label="Content padding" value="4.0, 2.0" />
          </Row>

          <Category title="Accessibility" />
          <Row label="Override Accessible Defaults">
            <CheckBox label="Override Accessible Defaults" />
          </Row>
          <Row label="Can Children be Accessible" disabled>
            <CheckBox label="Can Children be Accessible" checked disabled />
          </Row>
          <Row label="Accessible Behavior" disabled>
            <SelectField
              label="Accessible Behavior"
              value="Not Accessible"
              width="w-28"
              disabled
              tone="h-[22px] bg-[#383838] pr-6 text-[11px] text-[#909090]"
            />
          </Row>
          <AdvancedRow />

          <Category title="Appearance" />
          <Row label="Brush" expandable bound end="undo">
            <span className="size-[18px] bg-[#9c58d6]" />
          </Row>
          <Row label="Brush Color" expandable bound end="diamond">
            <ColorSwatch label="Brush Color" />
          </Row>
          <Row label="Desired Size Scale" expandable end="diamond">
            <TextField label="Size scale X" value="1.0" />
            <TextField label="Size scale Y" value="1.0" />
          </Row>
          <AdvancedRow />

          <Category title="Behavior" />
          <Row label="Tool Tip Text" bound>
            <TextField label="Tool Tip Text" />
            <svg viewBox="0 0 14 14" className="ml-1 size-[14px]">
              <path d="M.5 0v14" stroke="#c0c0c0" />
              <path d="M2 1c3-2 4.500 0 6 .5s3 .5 5 0V10c-2 .8-4 .6-5.500 0S4 9.500 2 11z" fill="#6f6f6f" />
            </svg>
          </Row>
          <Row label="Is Enabled" bound end="diamond">
            <CheckBox label="Is Enabled" checked />
          </Row>
          <Row label="Visibility" bound end="diamond">
            <SelectField label="Visibility" value="Not Hit-Testable (Self Only)" width="w-[177px] shrink-0" />
          </Row>
          <AdvancedRow />
        </div>
        <div className="w-4 shrink-0 bg-[#1a1a1a] px-1 pt-0.5">
          <div className="h-[406px] rounded-full bg-[#575757]" />
        </div>
      </div>
    </div>
  </aside>
);

/* ---------- desktop taskbar ---------- */

const TaskbarItem = ({ label, children, active }: { label: string; children: ReactNode; active?: boolean }) => (
  <button aria-label={label} className="flex w-11 shrink-0 items-center justify-center">
    <span className={clsx("relative flex h-[38px] w-[38px] items-center justify-center rounded", active && "bg-[#f0f2f3]")}>
      {children}
    </span>
  </button>
);

const Taskbar = () => (
  <footer className="h-[37px] shrink-0 overflow-hidden bg-linear-to-r from-[#dfd9d6] via-[#d9dee1] via-10% to-[#cfe0ea]">
    <div className="flex h-12 items-stretch pl-[151px] [font-family:'Noto_Sans_CJK_KR',sans-serif]">
      <TaskbarItem label="Start">
        <svg viewBox="0 0 24 24" className="size-6">
          <path d="M0 0h11.500v11.500H0zM12.500 0H24v11.500H12.500zM0 12.500h11.500V24H0zM12.500 12.500H24V24H12.500z" fill="#0f86dc" />
          <path d="M0 0h11.500v11.500H0z" fill="#36b3f2" />
        </svg>
      </TaskbarItem>
      <label className="my-auto mr-1 ml-[3px] flex h-[30px] w-[218px] items-center gap-[10px] rounded-full border border-[#c9ced1] bg-[#f4f6f6] pr-1 pl-2.5">
        <Search className="size-4 text-[#222]" />
        <input
          aria-label="검색"
          placeholder="검색"
          className="min-w-0 flex-1 bg-transparent text-[13px] outline-none placeholder:text-[#555]"
        />
        <svg viewBox="0 0 46 22" className="h-[22px] w-[46px] shrink-0">
          <path d="M2 20C5 14 8 8 15 2M5 15 1 10M7 11 4 5M10 7V1M5 15l8 0M7 11l8-1M10 7l7-1" stroke="#d4562a" strokeWidth="2.400" strokeLinecap="round" fill="none" />
          <path d="M18 16c2-2 1-5 4-5l2 1 2-3 3 1 4-1-1 4 2 3-5 2-5-1-3 2z" fill="#ef9a35" />
          <path d="M33 8c1-4 5-5 7-3l5-1-2 4c0 4-7 5-8 2z" fill="#9a9a23" />
        </svg>
      </label>
      <TaskbarItem label="Task view">
        <svg viewBox="0 0 24 24" className="size-6">
          <path d="M7 1h17v16H7z" fill="#fafafa" />
          <path d="M0 6h18v17H0z" fill="#2c2c2c" />
          <path d="M7 6h11v11H7z" fill="#b3b3b3" />
        </svg>
      </TaskbarItem>
      <TaskbarItem label="File Explorer">
        <svg viewBox="0 0 24 22" className="h-[22px] w-6">
          <path d="M0 2a2 2 0 0 1 2-2h7l2 3h13v6H0z" fill="#d99b12" />
          <path d="M0 4h24v18H0z" fill="#fbc93d" />
          <path d="M5 21v-3a2 2 0 0 1 2-2h10a2 2 0 0 1 2 2v3z" fill="#1278cc" />
        </svg>
      </TaskbarItem>
      <TaskbarItem label="KakaoTalk">
        <svg viewBox="0 0 24 24" className="size-6">
          <rect width="24" height="24" rx="2" fill="#fce000" />
          <ellipse cx="12" cy="11" rx="9" ry="7.500" fill="#3b1e1e" />
          <path d="m8 16 0 5 5-4z" fill="#3b1e1e" />
          <text x="12" y="13.500" fontSize="6" fontWeight="900" textAnchor="middle" fill="#fce000" fontFamily="Roboto">
            TALK
          </text>
        </svg>
      </TaskbarItem>
      <TaskbarItem label="Microsoft Store">
        <svg viewBox="0 0 24 24" className="size-6">
          <path d="M7 6V1h10v5" fill="none" stroke="#2bb5ee" strokeWidth="2" />
          <path d="M1 5h22v16a3 3 0 0 1-3 3H4a3 3 0 0 1-3-3z" fill="#16508f" />
          <path d="M7 9h4.500v4.500H7z" fill="#f25022" />
          <path d="M12.500 9H17v4.500h-4.500z" fill="#7fba00" />
          <path d="M7 14.500h4.500V19H7z" fill="#00a4ef" />
          <path d="M12.500 14.500H17V19h-4.500z" fill="#ffb900" />
        </svg>
      </TaskbarItem>
      <TaskbarItem label="Chrome">
        <svg viewBox="0 0 24 24" className="size-6">
          <path d="M12 12 1.600 6A12 12 0 0 1 22.400 6z" fill="#e33b2e" />
          <path d="M12 12 1.600 6A12 12 0 0 0 12 24l5-9z" fill="#2fa14f" />
          <path d="M12 12 12 6h10.400A12 12 0 0 1 12 24z" fill="#fbc116" />
          <path d="M6 12h6v6l-2.500 5.700L6.800 15z" fill="#2fa14f" />
          <circle cx="12" cy="12" r="5.800" fill="#fff" />
          <circle cx="12" cy="12" r="4.500" fill="#2f7de9" />
        </svg>
      </TaskbarItem>
      <TaskbarItem label="Slack">
        <svg viewBox="0 0 24 24" className="size-6" strokeWidth="3" strokeLinecap="round">
          <circle cx="12" cy="12" r="12" fill="#fff" />
          <path d="M10 6v.5M5.500 10h4.500" stroke="#36c5f0" />
          <path d="M14 5.500V10M18 10h.5" stroke="#2eb67d" />
          <path d="M14 14h4.500M14 18v.5" stroke="#ecb22e" />
          <path d="M10 14v4.500M6 14h.5" stroke="#e01e5a" />
        </svg>
      </TaskbarItem>
      <TaskbarItem label="Discord">
        <span className="flex size-6 items-center justify-center rounded-full bg-[#5865f2]">
          <FaDiscord className="size-4 text-white" />
        </span>
        <span className="absolute top-0.5 right-[3px] size-[14px] rounded-full border-[5px] border-[#ee5455] bg-white" />
      </TaskbarItem>
      <TaskbarItem label="Apple Music">
        <span className="flex size-6 items-center justify-center rounded-md bg-linear-to-b from-[#fb5c74] to-[#fa233b]">
          <FaMusic className="size-3.5 text-white" />
        </span>
      </TaskbarItem>
      <TaskbarItem label="Rider">
        <svg viewBox="0 0 24 24" className="size-6">
          <path d="M0 6 3 2h8l4 10-4 12H0z" fill="#f2166a" />
          <path d="M10 1 20 0l4 6v14l-8 4H6z" fill="#fca50f" />
          <path d="M1 3h8v8H1zM17 14l7-6v14h-6z" fill="#1c86ee" />
          <path d="M0 12h8v12H0z" fill="#f2166a" />
          <path d="M4 4h16v16H4z" fill="#0a0a0a" />
          <path d="M6 17h6" stroke="#fff" strokeWidth="1.200" />
          <text x="6" y="12.500" fontSize="8" fontWeight="700" fill="#fff" fontFamily="Roboto">
            RD
          </text>
        </svg>
      </TaskbarItem>
      <TaskbarItem label="Unreal Editor" active>
        <SiUnrealengine className="size-[22px] rounded-full bg-black text-white" />
      </TaskbarItem>

      <div className="ml-auto flex items-center text-[#222]">
        <ChevronUp className="mr-[18px] size-3.5" strokeWidth={2.5} />
        <Mic className="mr-[15px] size-4 text-[#1c59a8]" />
        <span className="mr-[17px] flex size-4 items-center justify-center rounded-full bg-[#161616]">
          <X className="size-2.5 text-white" strokeWidth={4} />
        </span>
        <svg viewBox="0 0 17 16" className="mr-[7px] h-4 w-[17px]" fill="none" stroke="#222">
          <path d="M10.500 1.500h-10v10h13V8M7 11.500v4M3.500 15.500h7M12.500.5h3v5h-3zM14 5.500V8" />
        </svg>
        <Volume2 className="mr-[14px] size-[17px]" strokeWidth={1.5} />
        <time className="w-[53px] pb-px text-[12px] leading-4 whitespace-nowrap">
          <span className="block pl-3">오후 7:3</span>
          <span className="block">2025-10-2</span>
        </time>
      </div>
    </div>
  </footer>
);

export default function App() {
  return (
    <div className="flex h-screen flex-col overflow-hidden bg-[#151515] [font-family:Roboto,'Noto_Sans_CJK_KR',sans-serif]">
      <div className="flex min-h-0 flex-1 flex-col px-0.5 pt-0.5">
        <div className="flex min-h-0 flex-1 flex-col border-t border-r border-l border-[#383838]">
          <Header />
          <Toolbar />
          <div className="flex min-h-0 flex-1 gap-[5px] px-1 pt-1 pb-[3px]">
            <div className="flex w-[225px] shrink-0 flex-col gap-[5px]">
              <Palette />
              <Hierarchy />
            </div>
            <Canvas />
            <Details />
          </div>
        </div>
      </div>
      <Taskbar />
    </div>
  );
}
